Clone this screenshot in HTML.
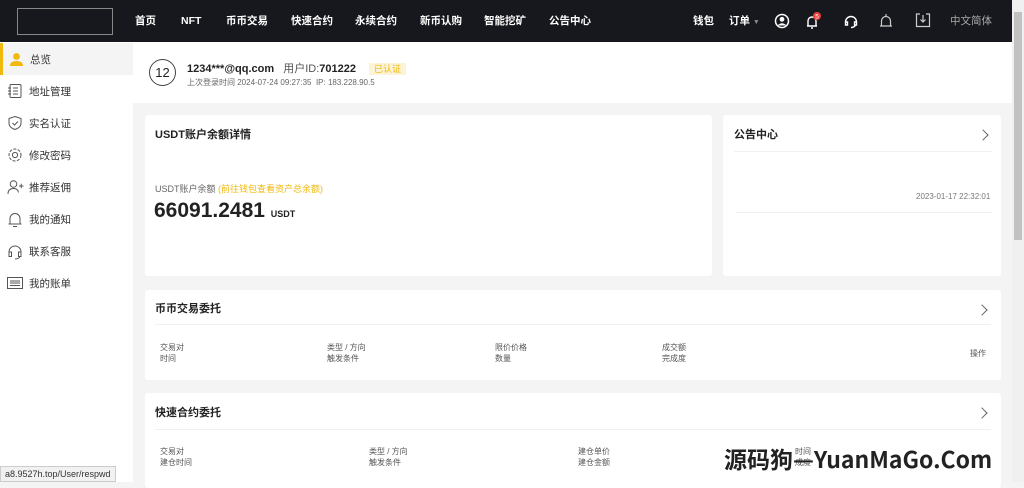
<!DOCTYPE html>
<html><head><meta charset="utf-8"><style>
*{margin:0;padding:0;box-sizing:border-box}
body{width:1024px;height:482px;overflow:hidden;background:#f4f4f4;font-family:"Liberation Sans","Noto Sans CJK SC",sans-serif;color:#222;position:relative}
.hd{position:absolute;left:0;top:0;width:1012px;height:42px;background:#17181d}
.logo{position:absolute;left:17px;top:8px;width:96px;height:27px;border:1px solid #888}
.nav{position:absolute;top:14px;height:14px;line-height:14px;font-size:10.5px;font-weight:bold;color:#fff}
.side{position:absolute;left:0;top:42px;width:133px;height:440px;background:#fff}
.si{position:absolute;left:0;width:133px;height:32px;font-size:10.5px;color:#333;display:flex;align-items:center}
.si svg{position:absolute;left:7px}
.si span{position:absolute;left:29px}
.act{background:#f4f4f4;border-left:3px solid #f0b90b}
.prof{position:absolute;left:133px;top:42px;width:879px;height:61px;background:#fff}
.card{position:absolute;background:#fff;border-radius:3px}
.t{position:absolute;font-size:11px;font-weight:bold;color:#222}
.s{position:absolute;font-size:8px;color:#555;line-height:11px}
.arr{position:absolute;width:8px;height:8px;border-top:1px solid #666;border-right:1px solid #666;transform:rotate(45deg)}
.ln{position:absolute;height:1px;background:#f0f0f0}
.sb{position:absolute;left:1012px;top:0;width:12px;height:482px;background:#f0f0f0}
</style></head><body>
<div class="hd">
<div class="logo"></div>
<div class="nav" style="left:135px">首页</div>
<div class="nav" style="left:181px">NFT</div>
<div class="nav" style="left:226px">币币交易</div>
<div class="nav" style="left:291px">快速合约</div>
<div class="nav" style="left:355px">永续合约</div>
<div class="nav" style="left:420px">新币认购</div>
<div class="nav" style="left:484px">智能挖矿</div>
<div class="nav" style="left:549px">公告中心</div>
<div class="nav" style="left:693px">钱包</div>
<div class="nav" style="left:729px">订单 <span style="color:#888;font-size:7px">▼</span></div>
<svg style="position:absolute;left:774px;top:13px" width="16" height="16"><circle cx="8" cy="8" r="6.5" fill="none" stroke="#fff" stroke-width="1.5"/><circle cx="8" cy="6.3" r="2.4" fill="#fff"/><path d="M3.5 12.5 Q8 8 12.5 12.5" fill="#fff"/></svg>
<svg style="position:absolute;left:804px;top:11px" width="18" height="18"><path d="M3 15 H13 M4 15 V10 A4 4 0 0 1 12 10 V15 M7 17 H9" fill="none" stroke="#fff" stroke-width="1.4"/><circle cx="13" cy="5" r="4" fill="#e5403d"/><text x="13" y="7.3" font-size="6.5" fill="#fff" text-anchor="middle">5</text></svg>
<svg style="position:absolute;left:843px;top:13px" width="16" height="16"><path d="M2.5 9 A5.5 5.5 0 0 1 13.5 9 M2.5 9 v3 h2 v-3z M13.5 9 v3 h-2 v-3z M12.5 12 Q11.5 14.5 8 14.5" fill="none" stroke="#fff" stroke-width="1.4"/></svg>
<svg style="position:absolute;left:878px;top:12px" width="16" height="18"><path d="M2 14 H14 M3.5 14 V9 A4.5 4.5 0 0 1 12.5 9 V14 M8 2 V4.5" fill="none" stroke="#ccc" stroke-width="1.2"/></svg>
<svg style="position:absolute;left:915px;top:12px" width="16" height="16"><path d="M5 2 H1.5 V14.5 H14.5 V2 H11 M8 3 V10 M5.5 7.5 L8 10 L10.5 7.5" fill="none" stroke="#ccc" stroke-width="1.2"/></svg>
<div class="nav" style="left:950px;color:#aaa;font-weight:normal">中文简体</div>
</div>
<div class="side">
<div class="si act" style="top:1px"><svg width="15" height="15" style="left:6px"><circle cx="7.5" cy="4.5" r="3.4" fill="#f0b90b"/><path d="M1 14 Q1 9 7.5 9 Q14 9 14 14z" fill="#f0b90b"/></svg><span style="left:27px">总览</span></div>
<div class="si" style="top:33px"><svg width="16" height="16"><rect x="3" y="1.5" width="11" height="13" rx="1" fill="none" stroke="#555"/><path d="M6 5h5M6 8h5M6 11h5M1 5h3M1 8h3M1 11h3" stroke="#555"/></svg><span>地址管理</span></div>
<div class="si" style="top:65px"><svg width="16" height="16"><path d="M8 1.5 L14 3.5 V8 Q14 12.5 8 14.5 Q2 12.5 2 8 V3.5z M5.5 8 l2 2 L11 6.5" fill="none" stroke="#555"/></svg><span>实名认证</span></div>
<div class="si" style="top:97px"><svg width="16" height="16"><circle cx="8" cy="8" r="2.6" fill="none" stroke="#555"/><circle cx="8" cy="8" r="6" fill="none" stroke="#555" stroke-dasharray="3 1.4"/></svg><span>修改密码</span></div>
<div class="si" style="top:129px"><svg width="17" height="16"><circle cx="6.5" cy="5" r="3.3" fill="none" stroke="#555"/><path d="M1 15 Q1 9.5 6.5 9.5 Q11 9.5 11.5 13.5M12 7h4.5M14.25 4.75v4.5" fill="none" stroke="#555"/></svg><span>推荐返佣</span></div>
<div class="si" style="top:161px"><svg width="16" height="17"><path d="M1.5 13 H14.5 M3 13 V7.5 A5 5 0 0 1 13 7.5 V13 M6 15.5 H10" fill="none" stroke="#555"/></svg><span>我的通知</span></div>
<div class="si" style="top:193px"><svg width="16" height="17"><path d="M2 9 A6 6 0 0 1 14 9 M2 9 v4.5 h2.5 v-4.5z M14 9 v4.5 h-2.5 v-4.5z M13 13.5 Q12 16 8 16" fill="none" stroke="#555"/></svg><span>联系客服</span></div>
<div class="si" style="top:225px"><svg width="16" height="14"><rect x="0.5" y="1.5" width="15" height="11" fill="none" stroke="#555"/><path d="M3 5h10M3 7h10M3 9.5h10" stroke="#555"/></svg><span>我的账单</span></div>
</div>
<div class="prof">
<div style="position:absolute;left:16px;top:17px;width:27px;height:27px;border:1px solid #444;border-radius:50%;font-size:13px;text-align:center;line-height:25px">12</div>
<div style="position:absolute;left:54px;top:18px;font-size:11px;font-weight:bold">1234***@qq.com <span style="font-weight:normal;color:#555;margin-left:6px">用户ID:</span>701222 <span style="font-weight:normal;color:#f0b90b;background:#fdf3d6;padding:1px 5px;margin-left:10px;font-size:9px">已认证</span></div>
<div class="s" style="left:54px;top:35px;color:#666">上次登录时间 2024-07-24 09:27:35 &nbsp;IP: 183.228.90.5</div>
</div>
<div class="card" style="left:145px;top:115px;width:567px;height:161px">
<div class="t" style="left:10px;top:11px">USDT账户余额详情</div>
<div class="s" style="left:10px;top:69px;font-size:9px;color:#666">USDT账户余额 <span style="color:#f0b90b">(前往钱包查看资产总余额)</span></div>
<div style="position:absolute;left:9px;top:84px;font-size:21px;font-weight:bold">66091.2481 <span style="font-size:9px">USDT</span></div>
</div>
<div class="card" style="left:723px;top:115px;width:278px;height:161px">
<div class="t" style="left:11px;top:11px">公告中心</div>
<div class="arr" style="left:256px;top:16px"></div>
<div class="ln" style="left:11px;top:36px;width:258px"></div>
<div class="s" style="left:193px;top:76px;color:#777">2023-01-17 22:32:01</div>
<div class="ln" style="left:13px;top:97px;width:256px"></div>
</div>
<div class="card" style="left:145px;top:290px;width:856px;height:90px">
<div class="t" style="left:10px;top:10px">币币交易委托</div>
<div class="arr" style="left:833px;top:16px"></div>
<div class="ln" style="left:10px;top:34px;width:836px"></div>
<div class="s" style="left:15px;top:52px">交易对<br>时间</div>
<div class="s" style="left:182px;top:52px">类型 / 方向<br>触发条件</div>
<div class="s" style="left:350px;top:52px">限价价格<br>数量</div>
<div class="s" style="left:517px;top:52px">成交额<br>完成度</div>
<div class="s" style="left:825px;top:58px">操作</div>
</div>
<div class="card" style="left:145px;top:393px;width:856px;height:95px">
<div class="t" style="left:10px;top:11px">快速合约委托</div>
<div class="arr" style="left:833px;top:16px"></div>
<div class="ln" style="left:10px;top:36px;width:836px"></div>
<div class="s" style="left:15px;top:53px">交易对<br>建仓时间</div>
<div class="s" style="left:224px;top:53px">类型 / 方向<br>触发条件</div>
<div class="s" style="left:433px;top:53px">建仓单价<br>建仓金额</div>
<div class="s" style="left:650px;top:53px">时间<br>成度</div>
</div>
<div style="position:absolute;left:724px;top:441px;font-size:23px;font-weight:bold;color:#222;font-family:'Liberation Sans Narrow','Noto Sans CJK SC',sans-serif">源码狗—YuanMaGo.Com</div>
<div class="sb"><div style="position:absolute;left:2px;top:12px;width:8px;height:228px;background:#c1c1c1"></div></div>
<div style="position:absolute;left:0;top:466px;height:16px;padding:2px 4px;background:#f1f1f1;border:1px solid #ccc;font-size:9px;color:#333">a8.9527h.top/User/respwd</div>
</body></html>
